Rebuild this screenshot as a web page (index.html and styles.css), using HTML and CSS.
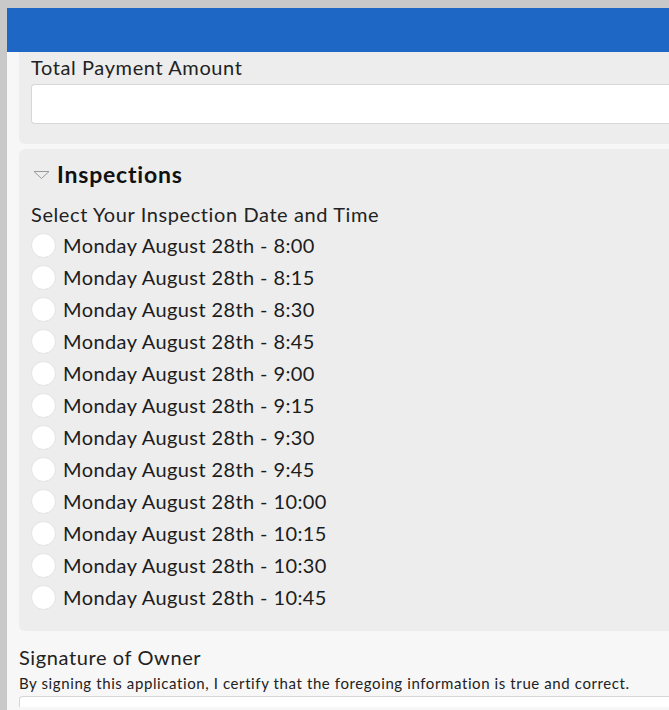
FILE: index.html
```html
<!DOCTYPE html>
<html lang="en">
<head>
  <meta charset="UTF-8" />
  <meta name="viewport" content="width=device-width, initial-scale=1.0" />
  <title>Inspection Application</title>
  <link rel="stylesheet" href="styles.css">
</head>
<body>
  <div class="app">
    <header class="topbar"></header>

    <main class="form">
      <!-- Payment -->
      <section class="card card-top">
        <label class="field-label" for="totalPayment">Total Payment Amount</label>
        <input type="text" id="totalPayment" class="text-input" />
      </section>

      <!-- Inspections -->
      <section class="card">
        <h2 class="group-title">
          <svg class="caret" width="17" height="10" viewBox="0 0 17 10">
            <path d="M1 1.5 L8.5 8.5 L16 1.5 Z" fill="none" stroke="#9a9a9a" stroke-width="1" />
          </svg>
          Inspections
        </h2>
        <div class="field-label">Select Your Inspection Date and Time</div>
        <div class="radio-list" id="slots"></div>
      </section>

      <!-- Signature -->
      <section class="plain">
        <div class="field-label">Signature of Owner</div>
        <div class="hint">By signing this application, I certify that the foregoing information is true and correct.</div>
        <div class="sign-box"></div>
      </section>
    </main>
  </div>

  <script>
    // Time slots for Monday
    const times = ["8:00", "8:15", "8:30", "8:45", "9:00", "9:15", "9:30", "9:45", "10:00", "10:15", "10:30", "10:45"];
    const slots = document.getElementById("slots");

    times.forEach((t, i) => {
      const label = document.createElement("label");
      label.className = "radio";
      label.innerHTML = `<input type="radio" name="slot" value="${t}" id="slot${i}" /><span class="dot"></span> Monday August 28th - ${t}`;
      slots.appendChild(label);
    });
  </script>
</body>
</html>
```

FILE: styles.css
```css
body {
  margin: 0;
  padding: 8px 0 0 7px;
  background: #c9c9c9;
  font-family: "Lato", "Noto Sans", sans-serif;
  letter-spacing: 0.6px;
  color: #1c1c1c;
  overflow: hidden;
  height: 710px;
  box-sizing: border-box;
}

.app {
  background: #f7f7f7;
  height: 100%;
  overflow: hidden;
}

.topbar {
  height: 44px;
  background: #1e67c5;
}

.form {
  padding-left: 12px;
}

.card {
  background: #ededed;
  border-radius: 6px 0 0 6px;
  padding: 7px 0 18px 12px;
  margin-bottom: 5px;
}

.card-top {
  border-radius: 0 0 0 6px;
  padding: 0 0 20px 12px;
}

.field-label {
  display: block;
  font-size: 20px;
  line-height: 26px;
  color: #222;
}

.text-input {
  display: block;
  box-sizing: border-box;
  width: 100%;
  height: 40px;
  margin: 2px 0 0;
  border: 1px solid #d6d6d6;
  border-right: none;
  border-radius: 4px 0 0 4px;
  background: #ffffff;
}

.group-title {
  display: flex;
  align-items: center;
  gap: 7px;
  margin: 0 0 7px;
  font-size: 23px;
  line-height: 36px;
  font-weight: 700;
  letter-spacing: 0.8px;
  color: #111;
}

.caret {
  margin-left: 2px;
  margin-top: 1px;
}

.card .field-label {
  line-height: 30px;
}

.radio-list {
  display: flex;
  flex-direction: column;
}

.radio {
  display: flex;
  align-items: center;
  height: 32px;
  font-size: 20px;
  letter-spacing: 0.4px;
  color: #1c1c1c;
  cursor: pointer;
}

.radio input {
  display: none;
}

.dot {
  width: 25px;
  height: 25px;
  box-sizing: border-box;
  border-radius: 50%;
  background: #ffffff;
  border: 1px solid #e3e3e3;
  margin-right: 7px;
}

.radio input:checked + .dot {
  border: 7px solid #1e67c5;
}

.plain {
  padding-top: 8px;
}

.hint {
  font-size: 15px;
  line-height: 20px;
  margin-top: 3px;
  color: #222;
}

.sign-box {
  height: 10px;
  margin-top: 3px;
  background: #ffffff;
  border: 1px solid #d6d6d6;
  border-bottom: none;
  border-right: none;
  border-radius: 4px 0 0 0;
}
```
